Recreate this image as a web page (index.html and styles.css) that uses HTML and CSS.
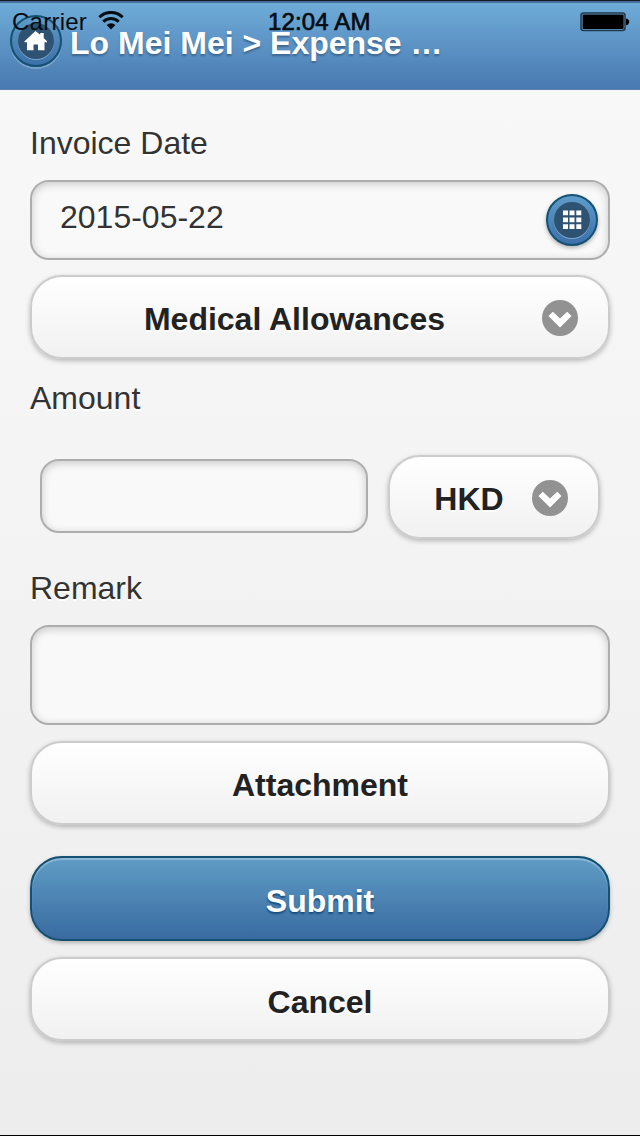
FILE: index.html
```html
<!DOCTYPE html>
<html lang="en">
<head>
<meta charset="utf-8">
<title>Expense</title>
<link rel="stylesheet" href="styles.css">
</head>
<body>
<div class="screen">
  <header class="header">
    <a class="round home" aria-label="Home">
      <svg width="52" height="52" viewBox="0 0 52 52">
        <circle cx="26" cy="27" r="18" fill="#a9c6e2" fill-opacity=".55"/>
        <circle cx="26" cy="26" r="18" fill="#2e5272"/>
        <path d="M25.500 16 14.500 26.300v1H17V35.300h6.500V29.500h4.500v5.800h6.500v-8H37v-1L33.700 23V18h-3.500v1.800z" fill="#fff"/>
      </svg>
    </a>
    <h1 class="title">Lo Mei Mei &gt; Expense …</h1>
    <div class="status">
      <span class="carrier">Carrier</span>
      <svg class="wifi" width="26" height="20" viewBox="0 0 26 20">
        <path d="M1.400 6.200a16.500 16.500 0 0 1 23.200 0M5.300 10.700a11 11 0 0 1 15.400 0" fill="none" stroke="#060d12" stroke-width="3"/>
        <path d="M13 18.500 8.600 14a6.300 6.300 0 0 1 8.800 0z" fill="#060d12"/>
      </svg>
      <span class="time">12:04 AM</span>
      <svg class="battery" width="51" height="20" viewBox="0 0 51 20">
        <rect x="1" y="1" width="44" height="17.500" rx="2.500" fill="none" stroke="#22394b" stroke-width="1.500"/>
        <rect x="2.600" y="2.600" width="41" height="14.300" rx="1"/>
        <path d="M46 6.500c4.300 .4 4.300 6.400 0 6.800z"/>
      </svg>
    </div>
  </header>
  <main class="form">
    <label class="label">Invoice Date</label>
    <div class="field date">
      <span>2015-05-22</span>
      <a class="round" aria-label="Pick a date">
        <svg width="52" height="52" viewBox="0 0 52 52">
          <circle cx="26" cy="27" r="18" fill="#a9c6e2" fill-opacity=".6"/>
          <circle cx="26" cy="26" r="18" fill="#2e5272"/>
          <path d="M17 16.500h5v4.800h-5zM23.500 16.500h5v4.800h-5zM30.300 16.500h5v4.800h-5zM17 23.500h5v4.800h-5zM23.500 23.500h5v4.800h-5zM30.300 23.500h5v4.800h-5zM17 30.300h5v4.800h-5zM23.500 30.300h5v4.800h-5zM30.300 30.300h5v4.800h-5z" fill="#fff"/>
        </svg>
      </a>
    </div>
    <div class="button select category">
      <span class="value">Medical Allowances</span>
      <svg width="36" height="36" viewBox="0 0 36 36"><circle cx="18" cy="18" r="18" fill="#929292"/><path d="M6.500 16 10.800 11.800 18 18.500l7.200-6.700 4.300 4.200L18 27.500z" fill="#fff"/></svg>
    </div>
    <label class="label amount-label">Amount</label>
    <div class="amount-row">
      <div class="field amount"></div>
      <div class="button select currency">
        <span class="value">HKD</span>
        <svg width="36" height="36" viewBox="0 0 36 36"><circle cx="18" cy="18" r="18" fill="#929292"/><path d="M6.500 16 10.800 11.800 18 18.500l7.200-6.700 4.300 4.200L18 27.500z" fill="#fff"/></svg>
      </div>
    </div>
    <label class="label remark-label">Remark</label>
    <div class="field remark"></div>
    <div class="button attachment">Attachment</div>
    <div class="button submit">Submit</div>
    <div class="button cancel">Cancel</div>
  </main>
</div>
</body>
</html>
```
FILE: styles.css
```css
* { box-sizing: border-box; }
body { margin: 0; font-family: "Liberation Sans", Arial, sans-serif; font-size: 32px; color: #333; }
.screen {
  height: 1136px; overflow: hidden;
  background: linear-gradient(#f9f9f9, #ededed);
  border-top: 1px solid #101820; border-bottom: 1px solid #000;
}
.header {
  position: relative; height: 89px; display: flex; align-items: flex-start;
  padding: 12px 10px 0;
  border-top: 2px solid #456f9a; border-bottom: 1px solid #5f84ad;
  background: linear-gradient(#6facd8, #4879b0);
}
.round {
  flex: none; width: 52px; height: 52px; border-radius: 50%;
  border: 2px solid #145072; background: linear-gradient(#5f9cc9, #3c70aa);
  box-shadow: 0 2px 4px rgba(0,0,0,.3);
}
.round svg { display: block; margin: -2px; }
.home { box-shadow: 0 2px 0 rgba(255,255,255,.25); }
.title {
  margin: 8px 0 0 8px; font-size: 32px; line-height: 40px; font-weight: bold;
  color: #fff; text-shadow: 0 2px 2px #3e6790; white-space: nowrap;
}
/* System status bar drawn over the page header */
.status {
  position: absolute; left: 0; top: 0; width: 640px; height: 38px;
  display: grid; grid-template-columns: 98px 170px 312px 60px; padding-top: 5px;
  font-size: 24px; line-height: 28px; color: #060d12;
}
.carrier { padding-left: 12px; letter-spacing: .25px; }
.wifi { margin-top: 3px; }
.time { -webkit-text-stroke: .7px #060d12; letter-spacing: .15px; white-space: nowrap; }
.battery { margin-top: 4px; }
.form { display: flex; flex-direction: column; padding: 33px 30px 0; }
.label { line-height: 40px; text-shadow: 0 2px 0 #fff; }
.field {
  border: 2px solid #adadad; border-radius: 19px; background: #f9f9f9;
  box-shadow: inset 0 2px 8px rgba(0,0,0,.2);
}
.date { height: 80px; margin-top: 17px; display: flex; justify-content: space-between; padding: 12px 10px 0 28px; }
.date span { line-height: 46px; text-shadow: 0 2px 0 #fff; }
.button {
  height: 84px; border: 2px solid #ccc; border-radius: 32px;
  background: linear-gradient(#fff, #f1f1f1);
  box-shadow: 0 2px 5px rgba(0,0,0,.25);
  color: #222; font-weight: bold; line-height: 84px; text-align: center;
  text-shadow: 0 2px 0 #fff;
}
.select { display: flex; align-items: flex-start; line-height: 84px; }
.select .value { flex: 1; }
.select svg { flex: none; margin-top: 23px; }
.category { margin-top: 15px; padding: 0 30px 0 28px; }
.category .value { padding-right: 13px; }
.amount-label { margin-top: 19px; }
.amount-row { display: flex; gap: 20px; padding: 0 10px; margin-top: 37px; }
.amount { width: 328px; height: 74px; margin-top: 4px; }
.currency { width: 212px; padding: 0 30px 0 28px; }
.currency .value { padding-right: 12px; }
.category .value, .currency .value { line-height: 85px; }
.remark-label { margin-top: 29px; }
.remark { height: 100px; margin-top: 17px; }
.attachment { margin-top: 16px; }
.submit {
  height: 85px; margin-top: 31px; border-color: #145072; line-height: 86px; color: #fff;
  background: linear-gradient(#5f9cc5, #396ba1); text-shadow: 0 2px 2px #194b7e;
  box-shadow: inset 0 2px 1px rgba(255,255,255,.3), 0 2px 4px rgba(0,0,0,.25);
}
.cancel { margin-top: 16px; line-height: 86px; }
```
